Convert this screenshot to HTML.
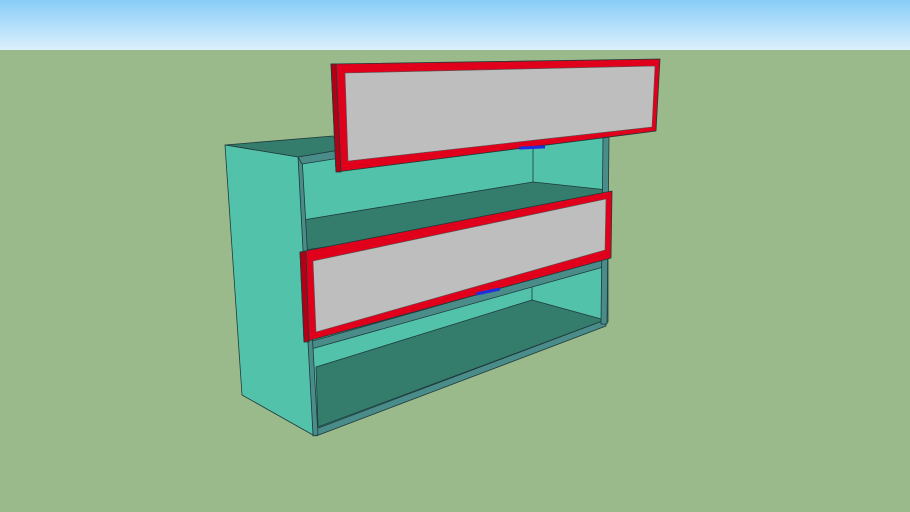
<!DOCTYPE html>
<html><head><style>html,body{margin:0;padding:0;width:910px;height:512px;overflow:hidden}</style></head>
<body>
<svg width="910" height="512" viewBox="0 0 910 512" xmlns="http://www.w3.org/2000/svg">
<defs><linearGradient id="sky" x1="0" y1="0" x2="0" y2="1">
<stop offset="0" stop-color="#88cdf8"/><stop offset="1" stop-color="#dcf0fc"/></linearGradient></defs>
<rect x="0" y="0" width="910" height="50" fill="url(#sky)"/>
<rect x="0" y="50" width="910" height="462" fill="#9aba8c"/>
<g stroke="#1e3a3a" stroke-width="0.8" stroke-linejoin="round">
<polygon points="225,145 333,136 340,150 298,157" fill="#347c6c"/>
<polygon points="300,160 608,130 608,322 313,430" fill="#52c3aa"/>
<polygon points="303,220 533,182 608,190 608,205 305,250" fill="#347c6c"/>
<polygon points="316,367 532,300 605,320 318,427" fill="#347c6c"/>
<line x1="533" y1="182" x2="533" y2="140" />
<line x1="532" y1="300" x2="532" y2="268" />
<polygon points="309,342 607,258 607,266 311,349" fill="#4a8c8a"/>
<polygon points="313,430 605,320 606,326 316,436" fill="#4a8c8a"/>
<polygon points="296,157 302,157 318,435 313,436" fill="#4a8c8a"/>
<polygon points="603,138 609,137 607,324 601,324" fill="#4a8c8a"/>
<polygon points="298,157 340,150 340,158 302,164" fill="#4a8c8a"/>
<polygon points="225,145 298,157 313,435 242,395" fill="#52c3aa"/>
<polygon points="300,252 612,191 611,258 304,342" fill="#e0001b"/>
<polygon points="300,252 306,252 309,342 304,342" fill="#b30014"/>
<polygon points="313,261 606,199 605,250 316,332" fill="#bebebe" stroke="#555" stroke-width="0.6"/>
<polygon points="331,64 660,59 656,131 336,172" fill="#e0001b"/>
<polygon points="331,64 336,64 341,172 336,172" fill="#b30014"/>
<polygon points="345,73 655,66 652,127 348,161" fill="#bebebe" stroke="#555" stroke-width="0.6"/>
</g>
<rect x="519" y="146" width="26" height="3" fill="#1f2fe0" transform="rotate(-3 532 147)"/>
<rect x="476" y="290" width="24" height="3" fill="#1f2fe0" transform="rotate(-12 488 291)"/>
</svg>
</body></html>
